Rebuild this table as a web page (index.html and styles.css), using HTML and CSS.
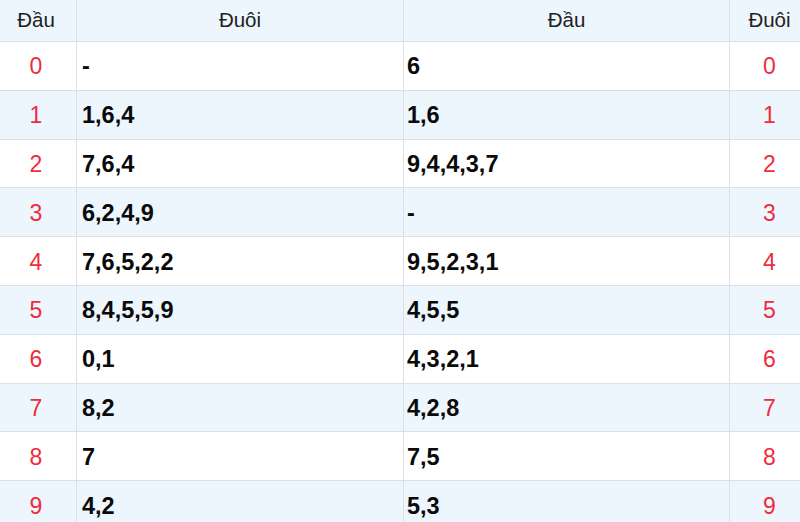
FILE: index.html
```html
<!DOCTYPE html>
<html>
<head>
<meta charset="utf-8">
<link rel="stylesheet" href="styles.css">
</head>
<body>
<table class="loto">
  <colgroup>
    <col class="c-num"><col class="c-val"><col class="c-val2"><col class="c-num2">
  </colgroup>
  <thead>
    <tr><th>Đầu</th><th>Đuôi</th><th>Đầu</th><th>Đuôi</th></tr>
  </thead>
  <tbody>
    <tr><td class="num">0</td><td class="val">-</td><td class="val">6</td><td class="num">0</td></tr>
    <tr><td class="num">1</td><td class="val">1,6,4</td><td class="val">1,6</td><td class="num">1</td></tr>
    <tr><td class="num">2</td><td class="val">7,6,4</td><td class="val">9,4,4,3,7</td><td class="num">2</td></tr>
    <tr><td class="num">3</td><td class="val">6,2,4,9</td><td class="val">-</td><td class="num">3</td></tr>
    <tr><td class="num">4</td><td class="val">7,6,5,2,2</td><td class="val">9,5,2,3,1</td><td class="num">4</td></tr>
    <tr><td class="num">5</td><td class="val">8,4,5,5,9</td><td class="val">4,5,5</td><td class="num">5</td></tr>
    <tr><td class="num">6</td><td class="val">0,1</td><td class="val">4,3,2,1</td><td class="num">6</td></tr>
    <tr><td class="num">7</td><td class="val">8,2</td><td class="val">4,2,8</td><td class="num">7</td></tr>
    <tr><td class="num">8</td><td class="val">7</td><td class="val">7,5</td><td class="num">8</td></tr>
    <tr><td class="num">9</td><td class="val">4,2</td><td class="val">5,3</td><td class="num">9</td></tr>
  </tbody>
</table>
</body>
</html>
```
FILE: styles.css
```css
html, body {
  margin: 0;
  padding: 0;
  background: #ffffff;
}
body {
  font-family: "Liberation Sans", Arial, sans-serif;
  overflow: hidden;
  width: 800px;
  height: 522px;
}
.loto {
  width: 814px;
  border-collapse: collapse;
  table-layout: fixed;
  margin-top: -1px;
  margin-left: -5px;
}
.c-num { width: 81px; }
.c-val { width: 327px; }
.c-val2 { width: 326px; }
.c-num2 { width: 80px; }
.loto th,
.loto td {
  border: 1px solid #dcdfe3;
  padding: 0;
}
.loto thead tr {
  background: #edf5fd;
}
.loto th {
  height: 39px;
  font-weight: normal;
  font-size: 20.5px;
  color: #222;
  text-align: center;
  vertical-align: middle;
  padding-bottom: 2px;
}
.loto tbody td {
  height: 45.8px;
  vertical-align: middle;
  padding-top: 2px;
}
.loto tbody tr:nth-child(even) {
  background: #edf5fd;
}
.num {
  text-align: center;
  color: #ef2b3c;
  font-size: 23px;
}
.val {
  font-weight: bold;
  font-size: 23.5px;
  color: #0a0a0a;
  padding-left: 5px !important;
}
.loto td.val + td.val { padding-left: 3px !important; }
```
